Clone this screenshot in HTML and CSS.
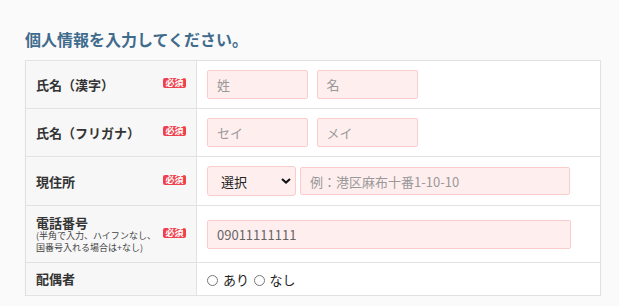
FILE: index.html
```html
<!DOCTYPE html>
<html lang="ja">

<head>
    <meta charset="utf-8">
    <link rel="stylesheet" href="styles.css">
</head>

<body>
    <div class="wrap">
        <h2 class="title">個人情報を入力してください。</h2>
        <table class="form-table">
            <tr>
                <th>
                    <div class="label">
                        <span>氏名（漢字）</span>
                        <span class="req">必須</span>
                    </div>
                </th>
                <td>
                    <input class="field short" type="text" placeholder="姓">
                    <input class="field short" type="text" placeholder="名">
                </td>
            </tr>
            <tr>
                <th>
                    <div class="label">
                        <span>氏名（フリガナ）</span>
                        <span class="req">必須</span>
                    </div>
                </th>
                <td>
                    <input class="field short" type="text" placeholder="セイ">
                    <input class="field short" type="text" placeholder="メイ">
                </td>
            </tr>
            <tr>
                <th>
                    <div class="label">
                        <span>現住所</span>
                        <span class="req">必須</span>
                    </div>
                </th>
                <td>
                    <span class="select-wrap">
                        <select class="pref">
                            <option>選択</option>
                        </select>
                        <svg class="chevron" width="10" height="6" viewBox="0 0 10 6">
                            <path d="M1 1 L5 4.6 L9 1" fill="none" stroke="#111" stroke-width="2"/>
                        </svg>
                    </span><input class="field address" type="text" placeholder="例：港区麻布十番1-10-10">
                </td>
            </tr>
            <tr>
                <th>
                    <div class="label">
                        <span class="tel">
                            <span class="tel-main">電話番号</span>
                            <span class="note">(半角で入力、ハイフンなし、</span>
                            <span class="note">国番号入れる場合は+なし)</span>
                        </span>
                        <span class="req">必須</span>
                    </div>
                </th>
                <td>
                    <input class="field phone" type="text" value="09011111111">
                </td>
            </tr>
            <tr class="row-radio">
                <th>
                    <div class="label">
                        <span>配偶者</span>
                    </div>
                </th>
                <td>
                    <label class="radio"><input type="radio" name="spouse">あり</label>
                    <label class="radio"><input type="radio" name="spouse">なし</label>
                </td>
            </tr>
        </table>
    </div>
</body>

</html>
```

FILE: styles.css
```css
body {
    background: #fafafa;
    margin: 0;
    font-family: "Noto Sans CJK JP", "Liberation Sans", sans-serif;
    color: #333;
}

.wrap {
    width: 576px;
    padding: 27px 0 0 25px;
}

.title {
    margin: 0 0 9px;
    font-size: 16px;
    line-height: 24px;
    font-weight: bold;
    color: #3f6b8c;
}

.form-table {
    width: 576px;
    border-collapse: collapse;
    background: #fff;
    box-shadow: 0 2px 1px rgba(0, 0, 0, 0.09);
}

.form-table th,
.form-table td {
    border: 1px solid #e2e2e2;
    padding: 9px 10px;
    vertical-align: middle;
    text-align: left;
}

.form-table th {
    width: 150px;
    background: #f7f7f7;
    font-size: 13px;
    font-weight: bold;
}

.label {
    display: flex;
    justify-content: space-between;
    align-items: center;
}

.req {
    display: inline-block;
    width: 23px;
    height: 10px;
    line-height: 10px;
    font-size: 9px;
    font-weight: bold;
    text-align: center;
    color: #fff;
    background: #f0404c;
    border-radius: 2px;
    margin-top: -3px;
}

.tel {
    display: flex;
    flex-direction: column;
}

.tel-main {
    line-height: 15px;
}

.note {
    font-size: 9px;
    line-height: 11.5px;
    font-weight: normal;
    color: #444;
}

.field {
    box-sizing: border-box;
    height: 29px;
    padding: 0 9px;
    font-family: inherit;
    font-size: 13px;
    color: #666;
    background: #ffeeee;
    border: 1px solid #fbcccc;
    border-radius: 2px;
    vertical-align: middle;
    outline: none;
}

.field::placeholder {
    color: #999;
}

.short {
    width: 101px;
}

.short + .short {
    margin-left: 5px;
}

.select-wrap {
    position: relative;
    display: inline-block;
    vertical-align: middle;
    margin-right: 4px;
}

.pref {
    -webkit-appearance: none;
    appearance: none;
    box-sizing: border-box;
    width: 89px;
    height: 30px;
    padding: 0 0 0 13px;
    font-family: inherit;
    font-size: 13px;
    color: #222;
    background: #ffeeee;
    border: 1px solid #fbcccc;
    border-radius: 3px;
    display: block;
}

.chevron {
    position: absolute;
    right: 5px;
    top: 12px;
}

.address {
    width: 270px;
    height: 28px;
}

.phone {
    width: 364px;
}

.row-radio th,
.row-radio td {
    line-height: 12px;
}

.radio {
    font-size: 13px;
    color: #222;
    margin-right: 1px;
}

.radio input {
    -webkit-appearance: none;
    appearance: none;
    width: 11px;
    height: 11px;
    margin: 0 5px 0 0;
    border: 1px solid #777;
    border-radius: 50%;
    background: #fff;
    vertical-align: -1px;
}
```
